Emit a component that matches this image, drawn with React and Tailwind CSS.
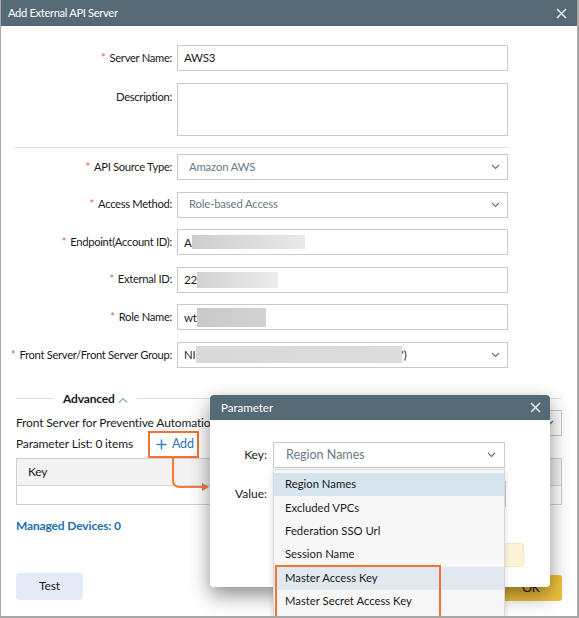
import React from 'react';

const Chevron = ({ className = '' }) => (
  <svg width="9" height="6" viewBox="0 0 9 6" className={className}>
    <path d="M1 1 L4.5 4.5 L8 1" fill="none" stroke="#6d6d6d" strokeWidth="1.1" />
  </svg>
);

const CloseX = () => (
  <svg width="11" height="11" viewBox="0 0 11 11">
    <path d="M1 1 L10 10 M10 1 L1 10" stroke="#e9eef0" strokeWidth="1.5" />
  </svg>
);

// grey redaction block over sensitive values
const Blur = ({ w, from = '#cdcdcd', to = '#e9e9e9', h = 15 }) => (
  <span
    className="inline-block"
    style={{ width: w, height: h, background: `linear-gradient(to right, ${from}, ${to})` }}
  />
);

function Row({ label, required, children, alignTop }) {
  return (
    <div className={`flex ${alignTop ? 'items-start' : 'items-center'}`}>
      <div className={`w-[171px] text-right text-[11.2px] tracking-[-0.3px] text-[#1a1a1a] whitespace-nowrap ${alignTop ? 'pt-[6px]' : ''}`}>
        {required && <span className="text-[#e35b4b] mr-[4px]">*</span>}
        {label}:
      </div>
      <div className="ml-[5px] w-[331px]">{children}</div>
    </div>
  );
}

function Input({ children }) {
  return (
    <div className="h-[26px] border border-[#cacaca] px-[6px] flex items-center text-[11.5px] tracking-[-0.2px] text-[#1a1a1a] whitespace-nowrap">
      {children}
    </div>
  );
}

function Select({ children, muted = true }) {
  return (
    <div className="h-[26px] border border-[#cacaca] pl-[11px] pr-[7px] flex items-center justify-between text-[11.3px] tracking-[-0.15px]">
      <span className={`flex items-center whitespace-nowrap ${muted ? 'text-[#6a7985]' : 'text-[#1a1a1a] -ml-[5px]'}`}>{children}</span>
      <Chevron />
    </div>
  );
}

export default function App() {
  const keys = [
    'Region Names',
    'Excluded VPCs',
    'Federation SSO Url',
    'Session Name',
    'Master Access Key',
    'Master Secret Access Key',
  ];

  return (
    <div className="relative w-[579px] h-[618px] overflow-hidden bg-white border-l border-r-2 border-b-2 border-[#a8a8a8] font-['Lato',sans-serif]">
      {/* title bar */}
      <div className="h-[26px] bg-[#566a75] flex items-center justify-between pl-[7px] pr-[10px]">
        <span className="text-white text-[11.2px] tracking-[-0.35px]">Add External API Server</span>
        <CloseX />
      </div>

      {/* form */}
      <div className="pt-[19px] flex flex-col">
        <Row label="Server Name" required>
          <Input>AWS3</Input>
        </Row>
        <div className="mt-[12px]">
          <Row label="Description" alignTop>
            <div className="h-[53px] border border-[#cacaca]" />
          </Row>
        </div>
        <div className="ml-[14px] w-[493px] border-t border-[#e0e0e0] mt-[11px] mb-[6px]" />
        <div className="flex flex-col gap-[11.6px]">
          <Row label="API Source Type" required>
            <Select>Amazon AWS</Select>
          </Row>
          <Row label="Access Method" required>
            <Select>Role-based Access</Select>
          </Row>
          <Row label="Endpoint(Account ID)" required>
            <Input>
              A<Blur w={113} h={14} />
            </Input>
          </Row>
          <Row label="External ID" required>
            <Input>
              22<Blur w={81} h={16} from="#d2d2d2" to="#ececec" />
            </Input>
          </Row>
          <Row label="Role Name" required>
            <Input>
              wt<Blur w={69} h={19} from="#c9c9c9" to="#d2d2d2" />
            </Input>
          </Row>
          <Row label="Front Server/Front Server Group" required>
            <Select muted={false}>
              NI<Blur w={206} h={17} from="#d9d9d9" to="#dcdcdc" />')
            </Select>
          </Row>
        </div>
      </div>

      {/* advanced section */}
      <div className="mt-[25px] pl-[15px] pr-[15px] flex flex-col text-[12px] tracking-[-0.15px] text-[#1a1a1a]">
        <div className="flex items-center h-[12px]">
          <div className="w-[38px] border-t border-[#e0e0e0]" />
          <span className="ml-[9px] font-bold">Advanced</span>
          <svg width="10" height="6" viewBox="0 0 10 6" className="ml-[3px] mt-[2px]">
            <path d="M1 5.5 L5 1.5 L9 5.5" fill="none" stroke="#86acc9" strokeWidth="1.2" />
          </svg>
          <div className="ml-[9px] flex-1 border-t border-[#e0e0e0]" />
        </div>
        <div className="mt-[5px] flex items-center justify-between">
          <span>Front Server for Preventive Automation:</span>
          <div className="w-[120px] h-[26px] border border-[#cacaca] flex items-center justify-end pr-[7px]">
            <Chevron />
          </div>
        </div>
        <div className="flex items-center h-[27px] mt-[-5px]">
          <span>Parameter List: 0 items</span>
          <span className="ml-[23px] flex items-center text-[#2a78b5] text-[12.5px]">
            <svg width="11" height="11" viewBox="0 0 11 11" className="mr-[5px]">
              <path d="M5.5 0.5 V10.5 M0.5 5.5 H10.5" stroke="#3a84c0" strokeWidth="1.5" />
            </svg>
            Add
          </span>
        </div>
        <div className="border border-[#cfcfcf]">
          <div className="h-[27px] bg-[#f3f3f3] border-b border-[#d6d6d6] flex items-center pl-[11px]">Key</div>
          <div className="h-[18px]" />
        </div>
        <div className="mt-[12px] font-bold text-[#1b6fae]">Managed Devices: 0</div>
        <div className="mt-[38px] flex items-start justify-between">
          <div className="w-[67px] h-[27px] rounded-[3px] bg-[#e3ebf7] flex items-center justify-center">Test</div>
          <div className="mt-[2px] w-[62px] h-[26px] rounded-[3px] bg-[#f0c23c] flex items-center justify-center">OK</div>
        </div>
      </div>

      {/* annotation: Add box */}
      <div className="absolute left-[147px] top-[431px] w-[51px] h-[27px] border-2 border-[#f3732f]" />
      <svg className="absolute left-[165px] top-[456px]" width="50" height="40" viewBox="0 0 50 40">
        <path d="M7 2 L7 24 Q7 31 14 31 L37 31" fill="none" stroke="#f47c3e" strokeWidth="2.2" />
        <path d="M36 27 L43 31 L36 35 Z" fill="#f47c3e" />
      </svg>

      {/* Parameter modal */}
      <div className="absolute left-[209px] top-[395px] w-[340px] h-[192px] rounded-[4px] bg-white shadow-[0_8px_20px_rgba(0,0,0,0.45)] overflow-hidden text-[12px] text-[#1a1a1a]">
        <div className="h-[25px] bg-[#566a75] flex items-center justify-between pl-[11px] pr-[9px]">
          <span className="text-white text-[11.5px]">Parameter</span>
          <CloseX />
        </div>
        <div className="pt-[22px] flex flex-col">
          <div className="flex items-center">
            <span className="w-[57px] text-right">Key:</span>
            <div className="ml-[6px] w-[232px] h-[26px] border border-[#cacaca] flex items-center justify-between pl-[12px] pr-[8px] text-[12.5px] text-[#6a7985]">
              Region Names
              <Chevron />
            </div>
          </div>
          <div className="flex items-center mt-[13px]">
            <span className="w-[57px] text-right">Value:</span>
            <div className="ml-[6px] w-[233px] h-[26px] border border-[#cacaca]" />
          </div>
          <div className="mt-[36px] ml-[231px] w-[83px] h-[24px] rounded-[3px] bg-[#fdf3d6] border border-[#f8e8ba]" />
        </div>
      </div>

      {/* dropdown list */}
      <div className="absolute left-[272px] top-[469px] w-[232px] h-[160px] bg-[#f7f7f7] border border-[#dadada] shadow-[0_2px_6px_rgba(0,0,0,0.15)] pt-[3px] text-[11.3px] text-[#1a1a1a]">
        {keys.map((k, i) => (
          <div
            key={k}
            className={`h-[23.4px] flex items-center pl-[11px] ${i === 0 ? 'bg-[#d5e4ed]' : i === 4 ? 'bg-[#e0e9ef]' : ''}`}
          >
            {k}
          </div>
        ))}
      </div>

      {/* annotation: master keys */}
      <div className="absolute left-[274px] top-[565px] w-[166px] h-[53px] border-2 border-[#f3732f]" />
    </div>
  );
}
